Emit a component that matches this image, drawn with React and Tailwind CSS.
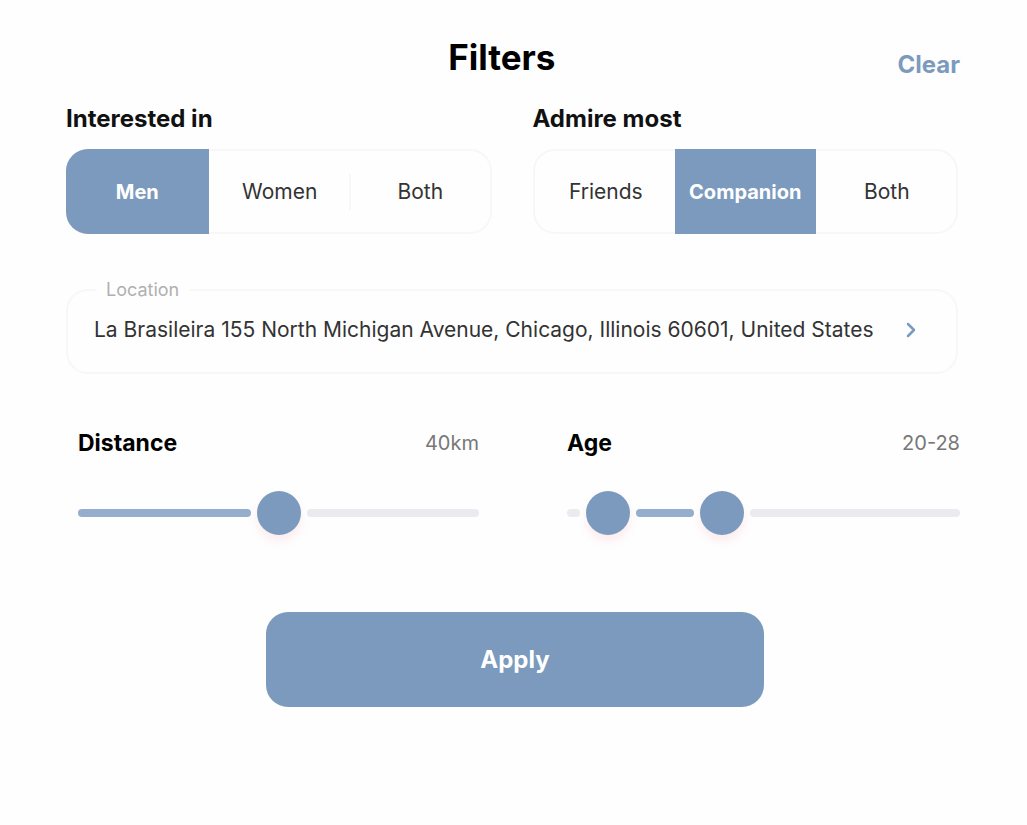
import { useState } from "react";

const THUMB = 44;
const GAP = 6;

const RANGE_CLASS =
  "pointer-events-none absolute inset-0 h-11 w-full cursor-pointer appearance-none bg-transparent outline-none " +
  "[&::-webkit-slider-thumb]:pointer-events-auto [&::-webkit-slider-thumb]:size-11 [&::-webkit-slider-thumb]:appearance-none [&::-webkit-slider-thumb]:rounded-full [&::-webkit-slider-thumb]:bg-[#7c9abd] [&::-webkit-slider-thumb]:shadow-[0_6px_10px_rgba(233,64,87,0.1)] " +
  "[&::-moz-range-thumb]:pointer-events-auto [&::-moz-range-thumb]:size-11 [&::-moz-range-thumb]:border-0 [&::-moz-range-thumb]:rounded-full [&::-moz-range-thumb]:bg-[#7c9abd]";

function Segmented({ title, name, options, initial }) {
  const [value, setValue] = useState(initial);
  const active = options.indexOf(value);
  return (
    <div role="radiogroup" aria-label={title}>
      <h2 className="text-2xl leading-8 font-bold text-[#111111]">{title}</h2>
      <div className="mt-[14px] grid h-[85px] grid-cols-3 rounded-[22px] border-2 border-[#f7f7f7]">
        {options.map((option, i) => {
          const selected = i === active;
          const divider = i > 0 && !selected && i - 1 !== active;
          return (
            <label
              key={option}
              className={
                selected
                  ? "-my-0.5 flex cursor-pointer items-center justify-center bg-[#7c9abd] text-xl font-bold text-white first:-ml-0.5 first:rounded-l-[22px] last:-mr-0.5 last:rounded-r-[22px]"
                  : "flex cursor-pointer items-center text-[21px] text-[#333333]"
              }
            >
              <input
                type="radio"
                name={name}
                value={option}
                checked={selected}
                onChange={() => setValue(option)}
                className="sr-only"
              />
              {!selected && <span className={divider ? "h-9 w-0.5 bg-[#f7f7f7]" : "h-9 w-0.5"} />}
              <span className={selected ? "" : "flex-1 text-center"}>{option}</span>
            </label>
          );
        })}
      </div>
    </div>
  );
}

const position = (value, min, max) => `(100% - ${THUMB}px) * ${(value - min) / (max - min)}`;

function DistanceSlider() {
  const [distance, setDistance] = useState(40);
  const pos = position(distance, 0, 80);
  return (
    <div>
      <div className="flex items-center justify-between leading-8">
        <label htmlFor="distance" className="text-[23px] font-bold text-black">Distance</label>
        <output htmlFor="distance" className="text-xl text-[#777777]">{distance}km</output>
      </div>
      <div className="relative mt-8 h-11">
        <div
          className="absolute top-[18px] left-0 h-2 rounded-full bg-[#95aece]"
          style={{ width: `calc(${pos} - ${GAP}px)` }}
        />
        <div
          className="absolute top-[18px] right-0 h-2 rounded-full bg-[#ebebef]"
          style={{ left: `calc(${pos} + ${THUMB + GAP}px)` }}
        />
        <input
          id="distance"
          type="range"
          min={0}
          max={80}
          value={distance}
          onChange={(e) => setDistance(Number(e.target.value))}
          className={RANGE_CLASS}
        />
      </div>
    </div>
  );
}

const AGE_MIN = 18.7;
const AGE_MAX = 43.1;

function AgeSlider() {
  const [from, setFrom] = useState(20);
  const [to, setTo] = useState(28);
  const a = position(from, AGE_MIN, AGE_MAX);
  const b = position(to, AGE_MIN, AGE_MAX);
  return (
    <div role="group" aria-labelledby="age-title">
      <div className="flex items-center justify-between leading-8">
        <h2 id="age-title" className="text-[23px] font-bold text-black">Age</h2>
        <output className="text-xl text-[#777777]">{Math.round(from)}-{Math.round(to)}</output>
      </div>
      <div className="relative mt-8 h-11">
        <div
          className="absolute top-[18px] left-0 h-2 rounded-full bg-[#ebebef]"
          style={{ width: `calc(${a} - ${GAP}px)` }}
        />
        <div
          className="absolute top-[18px] h-2 rounded-full bg-[#95aece]"
          style={{
            left: `calc(${a} + ${THUMB + GAP}px)`,
            right: `calc(100% - (${b}) + ${GAP}px)`,
          }}
        />
        <div
          className="absolute top-[18px] right-0 h-2 rounded-full bg-[#ebebef]"
          style={{ left: `calc(${b} + ${THUMB + GAP}px)` }}
        />
        <input
          type="range"
          aria-label="Minimum age"
          min={AGE_MIN}
          max={AGE_MAX}
          step={0.1}
          value={from}
          onChange={(e) => setFrom(Math.min(Number(e.target.value), to - 1))}
          className={RANGE_CLASS}
        />
        <input
          type="range"
          aria-label="Maximum age"
          min={AGE_MIN}
          max={AGE_MAX}
          step={0.1}
          value={to}
          onChange={(e) => setTo(Math.max(Number(e.target.value), from + 1))}
          className={RANGE_CLASS}
        />
      </div>
    </div>
  );
}

export default function App() {
  return (
    <main className="min-h-screen bg-[#fefefe] pt-8 pr-[67px] pb-10 pl-[66px] font-['Inter',sans-serif]">
      <header className="flex items-center justify-between">
        <div className="w-10" />
        <h1 className="text-[35px] leading-[50px] font-bold text-black">Filters</h1>
        <button type="button" className="mt-4 cursor-pointer text-2xl leading-8 font-bold text-[#7c9abd]">
          Clear
        </button>
      </header>

      <div className="mt-[21px] mr-0.5 grid grid-cols-2 gap-[41px]">
        <Segmented title="Interested in" name="interest" options={["Men", "Women", "Both"]} initial="Men" />
        <Segmented title="Admire most" name="admire" options={["Friends", "Companion", "Both"]} initial="Companion" />
      </div>

      <fieldset className="mt-11 mr-0.5 rounded-[22px] border-2 border-[#f7f7f7]">
        <legend className="ml-7 px-2.5 text-lg leading-6 text-[#b0b0b0]">Location</legend>
        <button
          type="button"
          className="flex h-[70px] w-full cursor-pointer items-center justify-between pr-10 pb-3.5 pl-[26px] text-left text-[21px] text-[#333333]"
        >
          <span>La Brasileira 155 North Michigan Avenue, Chicago, Illinois 60601, United States</span>
          <svg className="h-4 w-2.5 shrink-0 text-[#7c9abd]" viewBox="0 0 10 16" fill="none" stroke="currentColor" strokeWidth="2.5" strokeLinecap="round" strokeLinejoin="round" aria-hidden="true">
            <path d="M2 2l6 6-6 6" />
          </svg>
        </button>
      </fieldset>

      <div className="mt-[53px] grid grid-cols-[401fr_393fr] gap-[88px] pl-3">
        <DistanceSlider />
        <AgeSlider />
      </div>

      <div className="mt-[77px] flex justify-center pl-1">
        <button
          type="button"
          className="h-[95px] w-[498px] max-w-full cursor-pointer rounded-[22px] bg-[#7c9abd] text-2xl font-bold text-white"
        >
          Apply
        </button>
      </div>
    </main>
  );
}
